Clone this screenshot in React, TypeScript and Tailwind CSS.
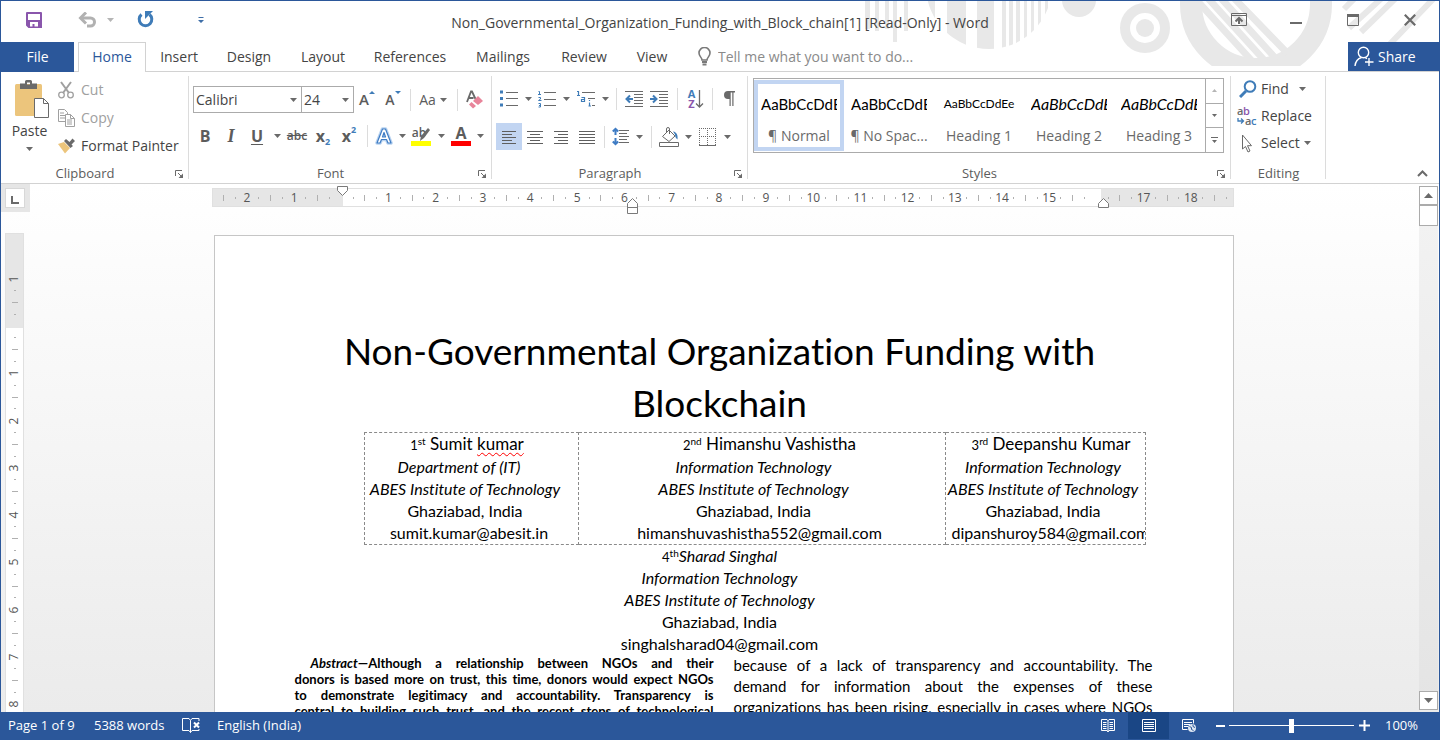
import type { ReactNode } from "react";

const Caret = ({ faint = false }: { faint?: boolean }) => (
  <svg width="7" height="4" viewBox="0 0 7 4" className={faint ? "fill-[#b5b5b5]" : "fill-[#6a6a6a]"} aria-hidden="true">
    <path d="M0 0h7L3.500 4z" />
  </svg>
);

type BtnProps = { label: string; w: string; children: ReactNode; active?: boolean; className?: string };

const Btn = ({ label, w, children, active = false, className = "" }: BtnProps) => (
  <button
    type="button"
    aria-label={label}
    className={`flex h-[27px] shrink-0 items-center justify-center ${w} ${active ? "bg-[#c2d5f2]" : ""} ${className}`}
  >
    {children}
  </button>
);

const Sep = ({ w }: { w: string }) => (
  <span className={`flex h-[22px] shrink-0 justify-center ${w}`}>
    <span className="w-px bg-[#dcdcdc]" />
  </span>
);

const Launcher = ({ label }: { label: string }) => (
  <button type="button" aria-label={label} className="absolute right-[5px] bottom-1">
    <svg width="9" height="9" viewBox="0 0 9 9" fill="none" stroke="#6a6a6a">
      <path d="M.5 6V.5H7M3 3l3 3" />
      <path d="M8 3.500V8H3.500z" fill="#6a6a6a" stroke="none" />
    </svg>
  </button>
);

type GroupProps = { title: string; w: string; children: ReactNode; launcher?: boolean };

const Group = ({ title, w, children, launcher = true }: GroupProps) => (
  <section aria-label={title} className={`relative flex h-[111px] shrink-0 flex-col ${w}`}>
    <div className="h-[90px] shrink-0 pt-[5px]">{children}</div>
    <p className={`text-center text-[13px] leading-[22px] text-[#5c5c5c] ${launcher ? "pr-5" : ""}`}>{title}</p>
    {launcher && <Launcher label={`${title} settings`} />}
    <span className="absolute top-1 right-0 bottom-1 w-px bg-[#dcdcdc]" />
  </section>
);

/* ---------- Title bar ---------- */

const Backdrop = () => (
  <svg className="absolute top-0 right-0" width="580" height="65" viewBox="860 0 580 65" aria-hidden="true">
    <defs>
      <clipPath id="disc"><circle cx="990" cy="-15" r="63" /></clipPath>
      <clipPath id="hole"><circle cx="1256" cy="3" r="60" /></clipPath>
    </defs>
    <g fill="#e8e8e8">
      <path d="M866 0h5v28h-5zM876 0h4v30h-4zM886 0h4v28h-4zM894 0h4v41h-4zM905 0h4v30h-4z" />
      <path
        clipPath="url(#disc)"
        d="M926 0h10v70h-10zM948 0h19v70h-19zM978 0h17v70h-17zM1003 0h4v70h-4zM1010 0h4v70h-4zM1017 0h4v70h-4zM1025 0h3v70h-3zM1032 0h3v70h-3zM1039 0h3v70h-3zM1046 0h3v70h-3z"
      />
      <circle cx="1080" cy="-1" r="17" />
      <circle cx="1146" cy="27" r="9" />
    </g>
    <g fill="none" stroke="#e8e8e8">
      <circle cx="1146" cy="27" r="20" strokeWidth="10" />
      <circle cx="1257" cy="3" r="65" strokeWidth="22" />
      <g clipPath="url(#hole)" strokeWidth="7">
        <path d="M1232-6l60 62M1219-6l60 66M1206-6l60 66M1193-6l60 66" />
      </g>
      <path strokeWidth="6" d="M1345 8l10-10M1350 27l34-31M1362 31l38-37M1390 44l48-50" />
    </g>
  </svg>
);

const TitleBar = () => (
  <header className="grid h-[41px] shrink-0 grid-cols-[1fr_auto_1fr] items-center">
    <div className="flex items-center pb-1 pl-[25px]">
      <button type="button" aria-label="Save" className="mr-9">
        <svg width="16" height="16" viewBox="0 0 16 16">
          <path fill="#8a56ac" fillRule="evenodd" d="M0 1q0-1 1-1h14q1 0 1 1v15H2.500L0 13.500zM2 2v6h12V2zM4 10v4.500h2.500V12h2v2.500H12V10z" />
        </svg>
      </button>
      <button type="button" aria-label="Undo" className="mr-2.5">
        <svg width="19" height="16" viewBox="0 0 19 16" fill="none" stroke="#b1b1b1" strokeWidth="3">
          <path d="M3 6h9.500a4 4 0 0 1 0 8H9" />
          <path d="M8 0.500L2.500 6L8 11.500" />
        </svg>
      </button>
      <button type="button" aria-label="Undo history" className="mr-[23px]"><Caret faint /></button>
      <button type="button" aria-label="Redo" className="mr-11">
        <svg width="17" height="17" viewBox="0 0 17 17" fill="none" stroke="#3f7cb8" strokeWidth="3">
          <path d="M4.500 3.500A6.300 6.300 0 1 0 12.500 3.500" />
          <path d="M8 0h8l-2.500 2.500L8 8z" fill="#3f7cb8" stroke="none" />
        </svg>
      </button>
      <button type="button" aria-label="Customize toolbar">
        <svg width="6" height="6" viewBox="0 0 6 6" fill="#3f6fa8"><path d="M.5 0h5v1h-5zM0 3h6L3 6z" /></svg>
      </button>
    </div>
    <h1 className="pt-0.5 text-sm text-[#444]">Non_Governmental_Organization_Funding_with_Block_chain[1] [Read-Only] - Word</h1>
    <div className="flex h-full items-center justify-end pr-px pb-1 text-[#6a6a6a]">
      <button type="button" aria-label="Ribbon display options" className="flex w-[57px] justify-center">
        <svg width="16" height="13" viewBox="0 0 16 13" fill="none" stroke="currentColor">
          <path d="M.5.5h15v12H.5zM.5 2.500h15" />
          <path strokeWidth="2" d="M8 11V5M4.500 8.500L8 5l3.500 3.500" />
        </svg>
      </button>
      <button type="button" aria-label="Minimize" className="flex w-[57px] justify-center">
        <svg width="12" height="12" viewBox="0 0 12 12"><path fill="currentColor" d="M0 8h12v2H0z" /></svg>
      </button>
      <button type="button" aria-label="Maximize" className="flex w-[57px] justify-center">
        <svg width="12" height="12" viewBox="0 0 12 12" fill="none" stroke="currentColor"><path d="M.5.5h11v11H.5z" /><path strokeWidth="3" d="M0 1.500h12" /></svg>
      </button>
      <button type="button" aria-label="Close" className="flex w-[57px] justify-center">
        <svg width="12" height="12" viewBox="0 0 12 12" fill="none" stroke="currentColor" strokeWidth="2.200"><path d="M.8.8l10.400 10.400M11.200.8L.8 11.200" /></svg>
      </button>
    </div>
  </header>
);

const tabs: [string, string][] = [
  ["Insert", "w-[66px]"],
  ["Design", "w-[74px]"],
  ["Layout", "w-[74px]"],
  ["References", "w-[100px]"],
  ["Mailings", "w-[86px]"],
  ["Review", "w-[76px]"],
  ["View", "w-[60px]"],
];

const TabRow = () => (
  <nav className="flex h-[30px] shrink-0 border-b border-[#d2d2d2] text-sm text-[#444]">
    <button type="button" className="h-[30px] w-[73px] shrink-0 bg-[#2b579a] text-white">File</button>
    <button type="button" className="ml-1 h-[30px] w-[68px] shrink-0 border border-b-0 border-[#d2d2d2] bg-white pb-0.5 text-[#2b579a]">Home</button>
    {tabs.map(([name, w]) => (
      <button key={name} type="button" className={`shrink-0 ${w}`}>{name}</button>
    ))}
    <label className="ml-4 flex grow items-center">
      <svg width="13" height="19" viewBox="0 0 13 19" fill="none" stroke="#7a7a7a" strokeWidth="1.600">
        <path d="M4 13c0-2.500-3-3.500-3-7a5.500 5.500 0 0 1 11 0c0 3.500-3 4.500-3 7z" />
        <path d="M4 15h5M4.500 17.500h4" strokeWidth="1.800" />
      </svg>
      <input aria-label="Tell me what you want to do" placeholder="Tell me what you want to do..." className="ml-[7px] w-56 bg-transparent outline-none placeholder:text-[#8a8a8a]" />
    </label>
    <button type="button" className="flex h-[29px] w-[91px] shrink-0 items-center gap-1 bg-[#2b579a] pl-1.5 text-white">
      <svg width="20" height="21" viewBox="0 0 20 21" fill="none" stroke="white" strokeWidth="1.400">
        <circle cx="9.500" cy="6.500" r="5.200" />
        <path d="M1 20c.5-4.500 3-7.500 6.500-8.500M11 11.500l2 1.200M15 12v8M11 16h8.500" />
      </svg>
      Share
    </button>
  </nav>
);

/* ---------- Ribbon groups ---------- */

const Clipboard = () => (
  <Group title="Clipboard" w="w-[188px]">
    <div className="flex pt-0.5">
      <button type="button" className="flex w-[57px] flex-col items-center text-sm leading-5 text-[#444]">
        <svg width="36" height="40" viewBox="0 0 36 40" className="mt-px ml-1 shrink-0">
          <rect x="1" y="4" width="27" height="32" rx="1.500" fill="#ecc57c" />
          <path fill="#6a6a6a" d="M6 3.500h5V1.500Q11 0 12.500 0h4Q18 0 18 1.500v2h5V9H6zM13 2.500v2h3v-2z" fillRule="evenodd" />
          <path fill="#fff" stroke="#6a6a6a" d="M20.500 18.500h9l5 5v14h-14zM29.500 18.500v5h5" />
        </svg>
        <span className="mt-px">Paste</span>
        <span className="mt-1.5"><Caret /></span>
      </button>
      <div className="flex flex-col gap-2 text-sm leading-5 text-[#444]">
        <button type="button" className="flex items-center gap-1.5 pt-px text-[#a0a0a0]">
          <svg width="17" height="18" viewBox="0 0 17 18" fill="none" stroke="#a0a0a0" strokeWidth="1.300">
            <circle cx="3.500" cy="14" r="2.800" />
            <circle cx="12.500" cy="14" r="2.800" />
            <path strokeWidth="2" d="M3 1l8 11M13 1L5 12" />
          </svg>
          Cut
        </button>
        <button type="button" className="flex items-center gap-1.5 text-[#a0a0a0]">
          <svg width="17" height="18" viewBox="0 0 17 18" fill="#fff" stroke="#a0a0a0">
            <path d="M.5.5h6l3 3v9h-9zM2 4h4M2 6.500h5M2 9h5" />
            <path d="M7.500 5.500h5l4 4v8h-9zM12.500 5.500v4h4M9 11h5M9 13h5M9 15h5" />
          </svg>
          Copy
        </button>
        <button type="button" className="flex items-center gap-1.5">
          <svg width="17" height="16" viewBox="0 0 17 16">
            <path fill="#ecc57c" d="M0 6l6-2 6 6-5 5.500z" />
            <path fill="#6a6a6a" d="M6 3l2-2 3.500 3L14.500.5 17 3l-3.500 3.500L15 8l-2.500 2z" />
          </svg>
          Format Painter
        </button>
      </div>
    </div>
  </Group>
);

const Combo = ({ label, value, w }: { label: string; value: string; w: string }) => (
  <span className={`relative flex h-[27px] items-center border border-[#ababab] ${w}`}>
    <select aria-label={label} defaultValue={value} className="h-full w-full appearance-none bg-transparent pl-0.5 text-sm text-[#444] outline-none">
      <option>{value}</option>
    </select>
    <span className="pointer-events-none absolute right-1 flex"><Caret /></span>
  </span>
);

const FontGroup = () => (
  <Group title="Font" w="w-[303px]">
    <div className="flex items-center pt-[9px] pl-1 text-[#5c5c5c]">
      <Combo label="Font" value="Calibri" w="w-[109px]" />
      <Combo label="Font size" value="24" w="-ml-px w-[53px]" />
      <Btn label="Grow font" w="w-[26px]">
        <span className="text-[15px] font-semibold">A</span>
        <svg width="6" height="3" viewBox="0 0 6 3" className="mb-3.5"><path fill="#3f7cb8" d="M0 3h6L3 0z" /></svg>
      </Btn>
      <Btn label="Shrink font" w="w-[26px]">
        <span className="text-sm font-semibold">A</span>
        <svg width="6" height="3" viewBox="0 0 6 3" className="mb-3.5"><path fill="#3f7cb8" d="M0 0h6L3 3z" /></svg>
      </Btn>
      <Sep w="w-[8px]" />
      <Btn label="Change case" w="w-[38px]" className="gap-1">
        <span className="text-sm font-medium">Aa</span><Caret />
      </Btn>
      <Sep w="w-[10px]" />
      <Btn label="Clear formatting" w="w-[26px]">
        <svg width="18" height="19" viewBox="0 0 18 19">
          <path d="M1 12L5 1.500h1L9.500 9M2.500 8h5" fill="none" stroke="#6a6a6a" strokeWidth="1.800" />
          <path fill="#e8849a" d="M12 6l5 5-5 4-5-4z" />
          <path fill="#e8849a" d="M5.500 12l4.500 4-3 2.500-4-4z" />
        </svg>
      </Btn>
    </div>
    <div className="flex items-center pt-[9px] pl-[3px] text-[#5c5c5c]">
      <Btn label="Bold" w="w-[26px]"><b className="text-base">B</b></Btn>
      <Btn label="Italic" w="w-[26px]"><span className="font-['Liberation_Serif',serif] text-lg font-bold italic">I</span></Btn>
      <Btn label="Underline" w="w-[26px]"><b className="text-base underline underline-offset-2">U</b></Btn>
      <Btn label="Underline style" w="w-[14px]"><Caret /></Btn>
      <Btn label="Strikethrough" w="w-[26px]"><span className="text-xs font-semibold line-through">abc</span></Btn>
      <Btn label="Subscript" w="w-[26px]"><b className="text-base">x</b><span className="mt-3 text-[9px] font-bold text-[#3f7cb8]">2</span></Btn>
      <Btn label="Superscript" w="w-[26px]"><b className="text-base">x</b><span className="mb-3 text-[9px] font-bold text-[#3f7cb8]">2</span></Btn>
      <Sep w="w-[10px]" />
      <Btn label="Text effects" w="w-[24px]">
        <svg width="18" height="18" viewBox="0 0 18 18" fill="none" strokeLinejoin="round">
          <path d="M2 16L7.500 2h3L16 16h-3l-1.500-3.500h-5L5 16zM7.500 10h3L9 5.500z" stroke="#b9d3f0" strokeWidth="3.500" />
          <path d="M2 16L7.500 2h3L16 16h-3l-1.500-3.500h-5L5 16zM7.500 10h3L9 5.500z" stroke="#3f7cc4" strokeWidth="1.200" fill="#fff" />
        </svg>
      </Btn>
      <Btn label="Text effects menu" w="w-[12px]"><Caret /></Btn>
      <Btn label="Highlight" w="w-[26px]" className="flex-col">
        <span className="flex h-[15px] items-end">
          <span className="text-xs leading-4 font-semibold">ab</span>
          <svg width="10" height="14" viewBox="0 0 10 14" className="-ml-1.5"><path fill="#6a6a6a" d="M0 14l1-5 7-8 2 2-6 8z" /></svg>
        </span>
        <span className="h-[5px] w-5 bg-[#ff0]" />
      </Btn>
      <Btn label="Highlight colours" w="w-[14px]"><Caret /></Btn>
      <Btn label="Font colour" w="w-[26px]" className="flex-col">
        <b className="text-base leading-[15px]">A</b>
        <span className="h-[5px] w-5 bg-[#f00]" />
      </Btn>
      <Btn label="Font colours" w="w-[12px]"><Caret /></Btn>
    </div>
  </Group>
);

const Lines = ({ d }: { d: string }) => (
  <svg width="18" height="14" viewBox="0 0 18 14" fill="none" stroke="#5f5f5f"><path d={d} /></svg>
);

const ParagraphGroup = () => (
  <Group title="Paragraph" w="w-[256px]">
    <div className="flex items-center pt-2 pl-1">
      <Btn label="Bullets" w="w-[26px]">
        <svg width="18" height="17" viewBox="0 0 18 17">
          <path fill="#3f7cb8" d="M0 .5h3v3H0zM0 7h3v3H0zM0 13.500h3v3H0z" />
          <path stroke="#6a6a6a" d="M6 2.500h12M6 8.500h12M6 15.500h12" />
        </svg>
      </Btn>
      <Btn label="Bullet styles" w="w-[12px]"><Caret /></Btn>
      <Btn label="Numbering" w="w-[26px]">
        <svg width="18" height="18" viewBox="0 0 18 18" fill="none">
          <path stroke="#3f7cb8" d="M.5 1.500h1v3M0 4.500h3M.5 7.500h2v1.500l-2 1.500h3M.5 13.500h2v3.500h-2M1 15.500h1.500" />
          <path stroke="#6a6a6a" d="M6 2.500h12M6 9.500h12M6 15.500h12" />
        </svg>
      </Btn>
      <Btn label="Numbering styles" w="w-[12px]"><Caret /></Btn>
      <Btn label="Multilevel list" w="w-[28px]">
        <svg width="18" height="17" viewBox="0 0 18 17" fill="none">
          <path stroke="#3f7cb8" strokeWidth="1.200" d="M0 1.500h1.500v4M0 5.500h3M4.500 7.500h3v4h-3v-2h3M12.500 10v1M12.500 12.500v4M11.500 16h2.500" />
          <path stroke="#6a6a6a" d="M5 2.500h13M11 8.500h7M15 15.500h3" />
        </svg>
      </Btn>
      <Btn label="Multilevel list styles" w="w-[10px]"><Caret /></Btn>
      <Sep w="w-[12px]" />
      <Btn label="Decrease indent" w="w-[24px]">
        <svg width="18" height="16" viewBox="0 0 18 16" fill="none">
          <path stroke="#6a6a6a" d="M0 .5h18M9 3.500h9M9 6.500h9M9 9.500h9M9 12.500h9M0 15.500h18" />
          <path stroke="#3f7cb8" strokeWidth="2" d="M8 8H1.500M5 4.500L1.500 8L5 11.500" />
        </svg>
      </Btn>
      <Btn label="Increase indent" w="w-[26px]">
        <svg width="18" height="16" viewBox="0 0 18 16" fill="none">
          <path stroke="#6a6a6a" d="M0 .5h18M9 3.500h9M9 6.500h9M9 9.500h9M9 12.500h9M0 15.500h18" />
          <path stroke="#3f7cb8" strokeWidth="2" d="M0 8h6.500M3 4.500L6.500 8L3 11.500" />
        </svg>
      </Btn>
      <Sep w="w-[10px]" />
      <Btn label="Sort" w="w-[28px]">
        <span className="flex flex-col text-[11px] leading-[10px] font-bold">
          <span className="text-[#3f7cb8]">A</span><span className="text-[#8a56ac]">Z</span>
        </span>
        <svg width="9" height="18" viewBox="0 0 9 18" fill="none" stroke="#6a6a6a" strokeWidth="1.300"><path d="M4.500 0v17M1 13.500L4.500 17L8 13.500" /></svg>
      </Btn>
      <Sep w="w-[4px]" />
      <Btn label="Show paragraph marks" w="w-[30px]">
        <svg width="11" height="15" viewBox="0 0 11 15"><path fill="#6a6a6a" d="M11 0v1.500H9.500V15H8.300V1.500H6.700V15H5.500V8H4A4 4 0 0 1 4 0z" /></svg>
      </Btn>
    </div>
    <div className="flex items-center pt-[11px] pl-1">
      <Btn label="Align left" w="w-[26px]" active><Lines d="M2 1.500h14M2 4.500h10M2 7.500h14M2 10.500h10M2 13.500h14" /></Btn>
      <Btn label="Centre" w="w-[26px]"><Lines d="M1 1.500h16M4 4.500h10M1 7.500h16M4 10.500h10M1 13.500h16" /></Btn>
      <Btn label="Align right" w="w-[26px]"><Lines d="M2 1.500h14M6 4.500h10M2 7.500h14M6 10.500h10M2 13.500h14" /></Btn>
      <Btn label="Justify" w="w-[26px]"><Lines d="M1 1.500h16M1 4.500h16M1 7.500h16M1 10.500h16M1 13.500h16" /></Btn>
      <Sep w="w-[9px]" />
      <Btn label="Line spacing" w="w-[24px]">
        <svg width="18" height="19" viewBox="0 0 18 19" fill="none">
          <path stroke="#6a6a6a" d="M7 3.500h10M7 6.500h8M7 9.500h10M7 12.500h8M7 15.500h10" />
          <path stroke="#3f7cc4" strokeWidth="2" d="M3.500 2v6M3.500 11v6M.8 4.500L3.500 1.800L6.200 4.500M.8 14.500L3.500 17.200L6.200 14.500" />
        </svg>
      </Btn>
      <Btn label="Line spacing options" w="w-[12px]"><Caret /></Btn>
      <Sep w="w-[12px]" />
      <Btn label="Shading" w="w-[24px]">
        <svg width="20" height="20" viewBox="0 0 20 20" fill="none" stroke="#6a6a6a">
          <path d="M3.500 9.500L10 3l6 6-6 5.500zM7.500 5.500V2Q7.500.5 9 .5T10.500 2v5" />
          <path d="M14 4.500c4 .5 5 4 4.500 8-1.500-1-2.500-3-2.500-5z" fill="#3f7cb8" stroke="none" />
          <path d="M.5 15.500h19v4H.5z" />
        </svg>
      </Btn>
      <Btn label="Shading colours" w="w-[14px]"><Caret /></Btn>
      <Btn label="Borders" w="w-[26px]">
        <svg width="18" height="18" viewBox="0 0 18 18" fill="none" stroke="#6a6a6a">
          <path strokeDasharray="1 1" d="M0 .5h17M.5 0v17M16.500 0v17M0 8.500h17M8.500 0v17" />
          <path d="M0 17.500h17" />
        </svg>
      </Btn>
      <Btn label="Border styles" w="w-[12px]"><Caret /></Btn>
    </div>
  </Group>
);

const styleItems = [
  { name: "¶ Normal", sample: "AaBbCcDdEe", cls: "text-[15px]", active: true },
  { name: "¶ No Spac...", sample: "AaBbCcDdEe", cls: "text-[15px]", active: false },
  { name: "Heading 1", sample: "AaBbCcDdEe", cls: "justify-center text-xs", active: false },
  { name: "Heading 2", sample: "AaBbCcDdEe", cls: "text-base italic", active: false },
  { name: "Heading 3", sample: "AaBbCcDdEe", cls: "text-base italic", active: false },
];

const StylesGroup = () => (
  <Group title="Styles" w="w-[483px]">
    <div className="mt-px ml-[5px] flex h-[75px] w-[471px] border border-[#ababab]">
      <div className="flex grow">
        {styleItems.map((s) => (
          <button
            key={s.name}
            type="button"
            className={`my-px flex w-[90px] shrink-0 flex-col items-center border-4 px-0.5 pt-2 ${s.active ? "border-[#c2d5f2]" : "border-transparent"}`}
          >
            <span className={`flex h-6 w-[76px] shrink-0 items-center overflow-hidden font-[Lato,sans-serif] whitespace-nowrap text-black ${s.cls}`}>{s.sample}</span>
            <span className="mt-2 text-sm leading-6 text-[#6a6a6a]">{s.name}</span>
          </button>
        ))}
      </div>
      <div className="flex w-[18px] flex-col divide-y divide-[#ababab] border-l border-[#ababab]">
        <button type="button" aria-label="Previous styles" className="flex flex-1 items-center justify-center">
          <svg width="5" height="3" viewBox="0 0 5 3"><path fill="#b5b5b5" d="M0 3h5L2.500 0z" /></svg>
        </button>
        <button type="button" aria-label="Next styles" className="flex flex-1 items-center justify-center">
          <svg width="5" height="3" viewBox="0 0 5 3"><path fill="#6a6a6a" d="M0 0h5L2.500 3z" /></svg>
        </button>
        <button type="button" aria-label="All styles" className="flex flex-1 items-center justify-center">
          <svg width="7" height="6" viewBox="0 0 7 6"><path fill="#6a6a6a" d="M0 0h7v1H0zM1 3h5L3.500 6z" /></svg>
        </button>
      </div>
    </div>
  </Group>
);

const EditingGroup = () => (
  <Group title="Editing" w="w-[95px]" launcher={false}>
    <div className="flex flex-col gap-[3px] pl-1.5 text-sm leading-6 text-[#444]">
      <button type="button" className="flex items-center">
        <svg width="18" height="18" viewBox="0 0 18 18" fill="none" stroke="#3f7cb8" className="ml-0.5">
          <circle cx="11" cy="6.500" r="5.300" strokeWidth="2" />
          <path strokeWidth="3" d="M7 11l-6 6" />
        </svg>
        <span className="mr-2.5 ml-1">Find</span><Caret />
      </button>
      <button type="button" className="flex items-center">
        <svg width="20" height="19" viewBox="0 0 20 19" fontFamily="Open Sans" fontWeight="600" fontSize="11">
          <text x="0" y="8" fill="#6a6a6a">a</text>
          <text x="6" y="8" fill="#8a56ac">b</text>
          <text x="8" y="18" fill="#6a6a6a">a</text>
          <text x="14" y="18" fill="#3f7cb8">c</text>
          <path d="M1 11v3h5M4 11.500L6.500 14L4 16.500" fill="none" stroke="#3f7cb8" strokeWidth="1.300" />
        </svg>
        <span className="ml-1">Replace</span>
      </button>
      <button type="button" className="flex items-center">
        <svg width="20" height="19" viewBox="0 0 20 19" fill="#fff" stroke="#6a6a6a">
          <path d="M5.500 1v14l3-2.500 2.500 5.500 2-1-2.500-5.300h4z" />
        </svg>
        <span className="mr-1 ml-1">Select</span><Caret />
      </button>
    </div>
  </Group>
);

const Ribbon = () => (
  <div className="flex h-[112px] shrink-0 border-b border-[#d2d2d2] bg-white">
    <Clipboard />
    <FontGroup />
    <ParagraphGroup />
    <StylesGroup />
    <EditingGroup />
    <div className="flex grow items-end justify-end pr-[11px] pb-1.5">
      <button type="button" aria-label="Collapse ribbon">
        <svg width="11" height="7" viewBox="0 0 11 7" fill="none" stroke="#6a6a6a" strokeWidth="2"><path d="M1 6l4.500-4.500L10 6" /></svg>
      </button>
    </div>
  </div>
);

/* ---------- Rulers ---------- */

const hTicks = Array.from({ length: 86 }, (_, i) => i - 10);
const vTicks = Array.from({ length: 37 }, (_, i) => i - 4);

const HorizontalRuler = () => (
  <div
    aria-label="Horizontal ruler"
    className="relative mr-0.5 flex h-[19px] w-[1022px] shrink-0 items-center self-center border border-[#e0e0e0] bg-[linear-gradient(to_right,#e6e6e6_130px,#fff_130px,#fff_888px,#e6e6e6_888px)] pl-[5px] text-xs text-[#555]"
  >
    {hTicks.map((k) => (
      <span key={k} className="flex min-w-0 flex-1 items-center justify-center">
        {k % 4 === 0 ? (
          k !== 0 && k !== 64 && <span>{Math.abs(k / 4)}</span>
        ) : (
          <span className={k % 2 === 0 ? "h-1.5 w-px shrink-0 bg-[#b0b0b0]" : "h-0.5 w-px shrink-0 bg-[#b0b0b0]"} />
        )}
      </span>
    ))}
    <svg className="absolute -top-[3px] left-[124px]" width="11" height="10" viewBox="0 0 11 10" fill="#fff" stroke="#7a7a7a"><path d="M.5.5h10v4l-5 5-5-5z" /></svg>
    <svg className="absolute top-[9px] left-[414px]" width="11" height="16" viewBox="0 0 11 16" fill="#fff" stroke="#7a7a7a"><path d="M.5 15.500v-10l5-5 5 5v10zM.5 9.500h10" /></svg>
    <svg className="absolute top-[9px] left-[885px]" width="11" height="10" viewBox="0 0 11 10" fill="#fff" stroke="#7a7a7a"><path d="M.5 9.500v-4l5-5 5 5v4z" /></svg>
  </div>
);

const VerticalRuler = () => (
  <div className="flex w-[29px] shrink-0 flex-col">
    <div className="h-7 shrink-0 bg-[#e6e6e6] p-1 pr-[5px]">
      <button type="button" aria-label="Tab selector" className="flex h-5 w-5 items-end justify-center border border-[#d8d8d8] bg-white pb-[3px]">
        <svg width="8" height="8" viewBox="0 0 8 8"><path fill="#6a6a6a" d="M0 0h2v6h6v2H0z" /></svg>
      </button>
    </div>
    <div
      aria-label="Vertical ruler"
      className="mt-[21px] ml-1 flex w-[19px] grow flex-col border border-b-0 border-[#e0e0e0] bg-[linear-gradient(to_bottom,#e6e6e6_94px,#fff_94px)] pt-[39px] pb-0.5 text-xs text-[#555]"
    >
      {vTicks.map((k) => (
        <span key={k} className="flex min-h-0 flex-1 items-center justify-center">
          {k % 4 === 0 ? (
            k !== 0 && <span className="-rotate-90">{Math.abs(k / 4)}</span>
          ) : (
            <span className={k % 2 === 0 ? "h-px w-1.5 bg-[#b0b0b0]" : "h-px w-0.5 bg-[#b0b0b0]"} />
          )}
        </span>
      ))}
    </div>
  </div>
);

/* ---------- Document ---------- */

const Sup = ({ n, s }: { n: string; s: string }) => (
  <span className="text-[13px]">{n}<sup className="text-[10px] leading-none">{s}</sup></span>
);

const AuthorsTable = () => (
  <table className="ml-[69px] w-[782px] table-fixed border-collapse text-center text-base leading-[22px] [&_td]:border [&_td]:border-dashed [&_td]:border-[#8a8a8a] [&_td]:p-0 [&_td]:align-top">
    <colgroup>
      <col className="w-[214px]" />
      <col className="w-[367px]" />
      <col />
    </colgroup>
    <tbody>
      <tr>
        <td>
          <div className="pr-3">
            <p className="h-[23px] indent-1 text-[17px]"><Sup n="1" s="st" /> Sumit <span className="underline decoration-[#f00] decoration-wavy decoration-1 underline-offset-2">kumar</span></p>
            <p className="pr-3 italic">Department of (IT)</p>
            <p className="italic">ABES Institute of Technology</p>
            <p>Ghaziabad, India</p>
            <p className="indent-2">sumit.kumar@abesit.in</p>
          </div>
        </td>
        <td>
          <div className="pr-4">
            <p className="h-[23px] indent-8 text-[17px]"><Sup n="2" s="nd" /> Himanshu Vashistha</p>
            <p className="italic">Information Technology</p>
            <p className="italic">ABES Institute of Technology</p>
            <p>Ghaziabad, India</p>
            <p className="indent-3">himanshuvashistha552@gmail.com</p>
          </div>
        </td>
        <td>
          <div className="overflow-hidden pr-1 whitespace-nowrap">
            <p className="h-[23px] indent-4 text-[17px]"><Sup n="3" s="rd" /> Deepanshu Kumar</p>
            <p className="italic">Information Technology</p>
            <p className="italic">ABES Institute of Technology</p>
            <p>Ghaziabad, India</p>
            <p className="indent-1.5">dipanshuroy584@gmail.com</p>
          </div>
        </td>
      </tr>
    </tbody>
  </table>
);

const leftLines = [
  "donors is based more on trust, this time, donors would expect NGOs",
  "to demonstrate legitimacy and accountability. Transparency is",
  "central to building such trust, and the recent steps of technological",
];

const rightLines = [
  "because of a lack of transparency and accountability. The",
  "demand for information about the expenses of these",
  "organizations has been rising, especially in cases where NGOs",
];

const Page = () => (
  <main className="mt-7 w-[1020px] grow self-center overflow-hidden border border-b-0 border-[#c6c6c6] bg-white px-20 pt-[89px] font-[Lato,sans-serif] text-black [font-variant-ligatures:none]">
    <div className="mr-2">
      <h2 className="pb-[3px] text-center text-[37px] leading-[52px]">
        Non-Governmental Organization Funding with<br />Blockchain
      </h2>
      <AuthorsTable />
      <div className="text-center text-base leading-[22px]">
        <p className="h-[22px] italic"><span className="not-italic"><Sup n="4" s="th" /></span>Sharad Singhal</p>
        <p className="italic">Information Technology</p>
        <p className="italic">ABES Institute of Technology</p>
        <p>Ghaziabad, India</p>
        <p>singhalsharad04@gmail.com</p>
      </div>
    </div>
    <div className="grid grid-cols-2 gap-5 [&_p]:[text-align-last:justify]">
      <div className="text-[13px] leading-4 font-bold whitespace-nowrap">
        <p className="pl-4"><i>Abstract</i>—Although a relationship between NGOs and their</p>
        {leftLines.map((l) => <p key={l}>{l}</p>)}
      </div>
      <div className="text-[15px] leading-[21px] whitespace-nowrap">
        {rightLines.map((l) => <p key={l}>{l}</p>)}
      </div>
    </div>
  </main>
);

const VerticalScroll = () => (
  <div className="mt-0.5 mr-px mb-0.5 flex w-[19px] shrink-0 flex-col bg-linear-to-b from-[#f3f3f3] to-[#e4e4e4]">
    <button type="button" aria-label="Scroll up" className="flex h-[19px] items-center justify-center border border-[#ababab] bg-white">
      <svg width="9" height="5" viewBox="0 0 9 5"><path fill="#6a6a6a" d="M0 5h9L4.500 0z" /></svg>
    </button>
    <span className="h-[21px] border border-[#ababab] bg-white" />
    <button type="button" aria-label="Scroll down" className="mt-auto flex h-[19px] items-center justify-center border border-[#ababab] bg-white">
      <svg width="9" height="5" viewBox="0 0 9 5"><path fill="#6a6a6a" d="M0 0h9L4.500 5z" /></svg>
    </button>
  </div>
);

/* ---------- Status bar ---------- */

const StatusBar = () => (
  <footer className="flex h-[27px] shrink-0 items-center bg-[#2b579a] pl-[7px] text-[13px] text-white">
    <span className="w-[86px]">Page 1 of 9</span>
    <span className="w-[88px]">5388 words</span>
    <button type="button" aria-label="Proofing" className="w-[35px]">
      <svg width="18" height="15" viewBox="0 0 18 15" fill="none" stroke="white">
        <path d="M8.500 2.500L7 .5H.5v12H7l1.500 2 1.500-2h7V11M8.500 2.500v12M8.500 2.500L10 .5h7V3" />
        <path strokeWidth="2" d="M12 4.500l5 5M17 4.500l-5 5" />
      </svg>
    </button>
    <span className="grow">English (India)</span>
    <button type="button" aria-label="Read mode" className="flex h-full w-[41px] items-center justify-center">
      <svg width="14" height="14" viewBox="0 0 14 14" fill="none" stroke="white">
        <path d="M.5.5h5.500l1 1 1-1h5.500v11H8l-1 1.500-1-1.500H.5zM7 1v12M2 3.500h3.500M2 5.500h3.500M2 7.500h3.500M2 9.500h3.500M8.500 3.500H12M8.500 5.500H12M8.500 7.500H12M8.500 9.500H12" />
      </svg>
    </button>
    <button type="button" aria-label="Print layout" className="flex h-full w-[41px] items-center justify-center bg-[#1a4685]">
      <svg width="14" height="13" viewBox="0 0 14 13" fill="none" stroke="white">
        <path d="M.5.5h13v12H.5zM2 3.500h10M2 5.500h10M2 7.500h10M2 9.500h10" />
      </svg>
    </button>
    <button type="button" aria-label="Web layout" className="flex h-full w-[41px] items-center justify-center">
      <svg width="15" height="14" viewBox="0 0 15 14" fill="none" stroke="white">
        <path d="M5.500 10.500h-5V.5h11v4M2 3.500h8M2 5.500h6M2 7.500h4" />
        <circle cx="10" cy="9" r="4" fill="#dce6f3" stroke="none" />
        <path stroke="#2b579a" d="M7.500 7.500l2 1v2l2 1M11 5.500v2l2 1" />
      </svg>
    </button>
    <button type="button" aria-label="Zoom out" className="ml-[5px] flex w-[10px] justify-center">
      <svg width="9" height="2" viewBox="0 0 9 2"><path fill="white" d="M0 0h9v2H0z" /></svg>
    </button>
    <input
      type="range"
      aria-label="Zoom"
      min="0"
      max="200"
      defaultValue="100"
      className="mx-1 h-4 w-[125px] appearance-none bg-[linear-gradient(white,white)] bg-[length:100%_1px] bg-center bg-no-repeat [&::-webkit-slider-thumb]:h-3.5 [&::-webkit-slider-thumb]:w-[5px] [&::-webkit-slider-thumb]:appearance-none [&::-webkit-slider-thumb]:bg-white"
    />
    <button type="button" aria-label="Zoom in" className="flex w-[12px] justify-center">
      <svg width="11" height="11" viewBox="0 0 11 11" stroke="white" strokeWidth="2"><path d="M0 5.500h11M5.500 0v11" /></svg>
    </button>
    <span className="ml-[15px] w-[54px]">100%</span>
  </footer>
);

export default function App() {
  return (
    <div className="relative flex h-screen flex-col overflow-hidden border border-[#2b579a] bg-white font-['Open_Sans','Noto_Sans',sans-serif]">
      <Backdrop />
      <div className="relative flex min-h-0 grow flex-col">
        <TitleBar />
        <TabRow />
        <Ribbon />
        <div className="flex min-h-0 grow bg-linear-to-b from-white to-[#ebebeb]">
          <VerticalRuler />
          <div className="flex min-w-0 grow flex-col overflow-hidden pt-1 pr-0.5">
            <HorizontalRuler />
            <Page />
          </div>
          <VerticalScroll />
        </div>
        <StatusBar />
      </div>
    </div>
  );
}
